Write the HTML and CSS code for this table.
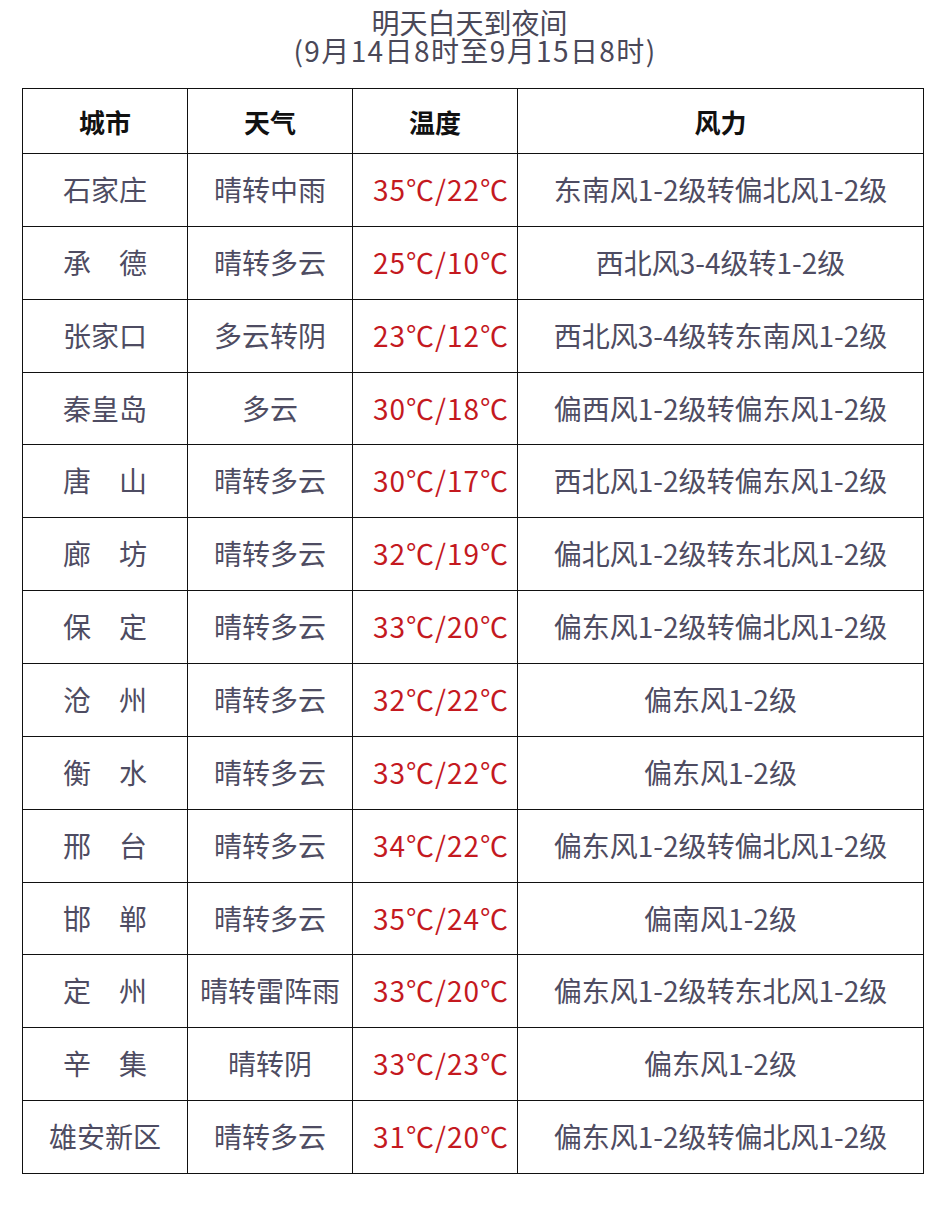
FILE: index.html
```html
<!DOCTYPE html>
<html lang="zh-CN">
<head>
<meta charset="utf-8">
<title>明天白天到夜间</title>
<link rel="stylesheet" href="styles.css">
</head>
<body>
<div class="page">
  <div class="title">
    <div class="t1">明天白天到夜间</div>
    <div class="t2">(9月14日8时至9月15日8时)</div>
  </div>
  <table class="forecast">
    <colgroup>
      <col class="c-city"><col class="c-weather"><col class="c-temp"><col class="c-wind">
    </colgroup>
    <thead>
      <tr><th>城市</th><th>天气</th><th>温度</th><th>风力</th></tr>
    </thead>
    <tbody>
      <tr><td>石家庄</td><td>晴转中雨</td><td class="temp">35℃/22℃</td><td>东南风1-2级转偏北风1-2级</td></tr>
      <tr><td>承　德</td><td>晴转多云</td><td class="temp">25℃/10℃</td><td>西北风3-4级转1-2级</td></tr>
      <tr><td>张家口</td><td>多云转阴</td><td class="temp">23℃/12℃</td><td>西北风3-4级转东南风1-2级</td></tr>
      <tr><td>秦皇岛</td><td>多云</td><td class="temp">30℃/18℃</td><td>偏西风1-2级转偏东风1-2级</td></tr>
      <tr><td>唐　山</td><td>晴转多云</td><td class="temp">30℃/17℃</td><td>西北风1-2级转偏东风1-2级</td></tr>
      <tr><td>廊　坊</td><td>晴转多云</td><td class="temp">32℃/19℃</td><td>偏北风1-2级转东北风1-2级</td></tr>
      <tr><td>保　定</td><td>晴转多云</td><td class="temp">33℃/20℃</td><td>偏东风1-2级转偏北风1-2级</td></tr>
      <tr><td>沧　州</td><td>晴转多云</td><td class="temp">32℃/22℃</td><td>偏东风1-2级</td></tr>
      <tr><td>衡　水</td><td>晴转多云</td><td class="temp">33℃/22℃</td><td>偏东风1-2级</td></tr>
      <tr><td>邢　台</td><td>晴转多云</td><td class="temp">34℃/22℃</td><td>偏东风1-2级转偏北风1-2级</td></tr>
      <tr><td>邯　郸</td><td>晴转多云</td><td class="temp">35℃/24℃</td><td>偏南风1-2级</td></tr>
      <tr><td>定　州</td><td>晴转雷阵雨</td><td class="temp">33℃/20℃</td><td>偏东风1-2级转东北风1-2级</td></tr>
      <tr><td>辛　集</td><td>晴转阴</td><td class="temp">33℃/23℃</td><td>偏东风1-2级</td></tr>
      <tr><td>雄安新区</td><td>晴转多云</td><td class="temp">31℃/20℃</td><td>偏东风1-2级转偏北风1-2级</td></tr>
    </tbody>
  </table>
</div>
</body>
</html>
```
FILE: styles.css
```css
html, body {
  margin: 0;
  padding: 0;
  background: #ffffff;
}
.page {
  width: 942px;
  padding: 8px 0 0 0;
  font-family: "Noto Sans CJK SC", "Noto Sans", sans-serif;
  color: #4e4c62;
}
.title {
  text-align: center;
  font-size: 28px;
  color: #4a4858;
}
.t1, .t2 {
  height: 28px;
  line-height: 28px;
}
.t1 {
  padding-right: 3px;
}
.t2 {
  letter-spacing: 1.4px;
  padding-left: 8px;
}
.forecast {
  margin: 24px 0 0 22px;
  border-collapse: collapse;
  table-layout: fixed;
  width: 901px;
}
.c-city, .c-weather, .c-temp { width: 165px; }
.c-wind { width: 406px; }
.forecast th, .forecast td {
  border: 1px solid #111111;
  padding: 0;
  text-align: center;
  vertical-align: middle;
  white-space: nowrap;
}
.forecast th {
  height: 64px;
  font-size: 26px;
  font-weight: 700;
  color: #111111;
}
.forecast td {
  height: 72.86px;
  font-size: 28px;
  color: #4e4c62;
  padding-bottom: 2px;
  box-sizing: border-box;
}
.forecast td.temp {
  color: #c4191f;
  letter-spacing: 1px;
  padding-left: 12px;
}
```
